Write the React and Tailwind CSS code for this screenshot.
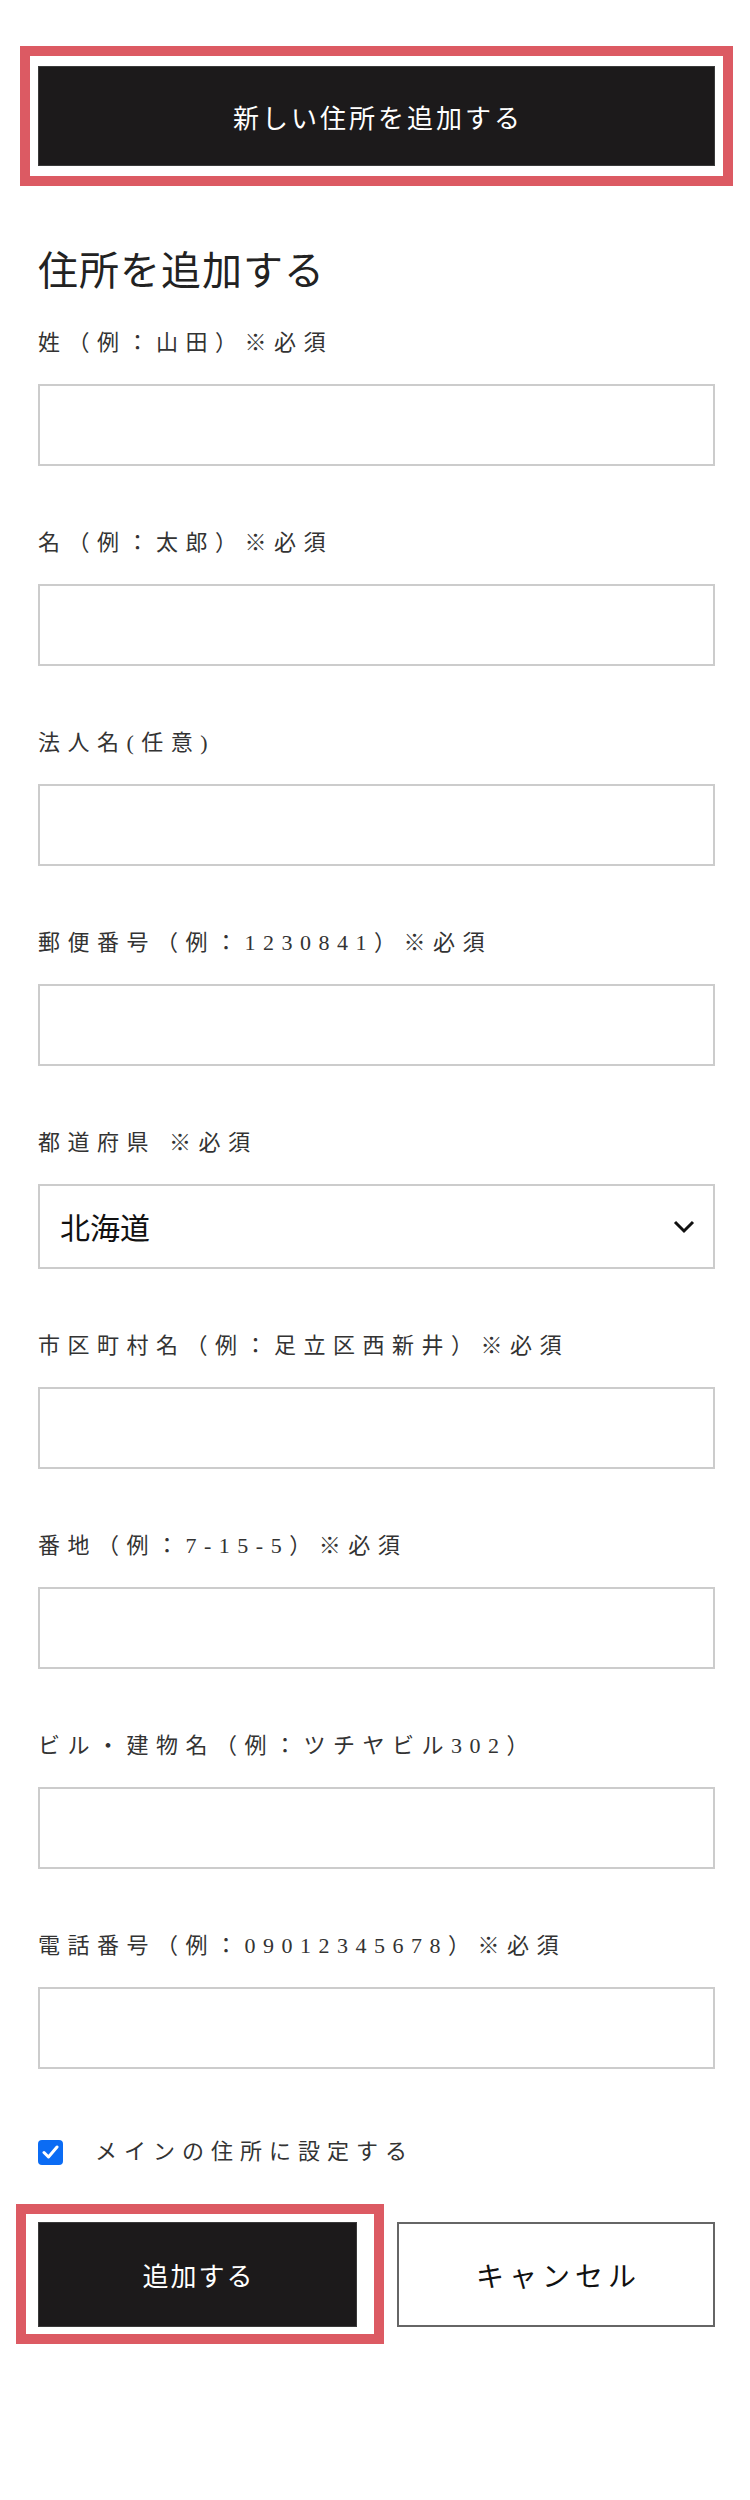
import React from "react";

const fields = [
  { label: "姓（例：山田）※必須" },
  { label: "名（例：太郎）※必須" },
  { label: "法人名(任意)" },
  { label: "郵便番号（例：1230841）※必須" },
  { label: "都道府県 ※必須", select: true },
  { label: "市区町村名（例：足立区西新井）※必須" },
  { label: "番地（例：7-15-5）※必須" },
  { label: "ビル・建物名（例：ツチヤビル302）" },
  { label: "電話番号（例：09012345678）※必須" },
];

const Field = ({ label, select }) => {
  return (
    <div>
      <label className="block text-[22px] leading-[32px] tracking-[7.5px] text-[#333] font-['Liberation_Serif','Noto_Sans_CJK_JP',serif]">
        {label}
      </label>
      {select ? (
        <div className="relative mt-[25px]">
          <select
            defaultValue="hokkaido"
            className="block h-[85px] w-full appearance-none rounded-none border-2 border-[#cccccc] bg-white pl-[20px] text-[30px] text-[#111] font-['Noto_Sans_CJK_JP',sans-serif] outline-none"
          >
            <option value="hokkaido">北海道</option>
          </select>
          <svg
            className="pointer-events-none absolute right-[20px] top-[36px]"
            width="22"
            height="14"
            viewBox="0 0 22 14"
            fill="none"
          >
            <path d="M2 2l9 9 9-9" stroke="#111" strokeWidth="3" />
          </svg>
        </div>
      ) : (
        <input
          type="text"
          className="mt-[25px] block h-[82px] w-full rounded-none border-2 border-[#cccccc] bg-white outline-none"
        />
      )}
    </div>
  );
};

const App = () => {
  return (
    <div className="w-[750px] bg-white pl-[38px] pr-[35px] pt-[66px] pb-[170px]">
      <div className="relative">
        <button className="block h-[100px] w-full border border-[#3a3a3a] bg-[#1c1a1b] pl-[3px] text-[26px] tracking-[3px] text-white font-['Noto_Sans_CJK_JP',sans-serif]">
          新しい住所を追加する
        </button>
        <div className="pointer-events-none absolute -inset-x-[18px] -inset-y-[20px] border-[10px] border-[#dc5a63]" />
      </div>

      <h2 className="mt-[82px] text-[40px] leading-[48px] tracking-[1px] text-[#222] font-['Liberation_Serif','Noto_Sans_CJK_JP',serif]">
        住所を追加する
      </h2>

      <div className="mt-[31px] flex flex-col gap-[61px]">
        {fields.map((f, idx) => (
          <Field key={idx} label={f.label} select={f.select} />
        ))}
      </div>

      <div className="mt-[67px] flex items-center">
        <span className="flex h-[25px] w-[25px] items-center justify-center rounded-[4px] bg-[#0b6cf4]">
          <svg width="17" height="14" viewBox="0 0 17 14" fill="none">
            <path
              d="M2 7.5l4.5 4.5L15 2"
              stroke="#fff"
              strokeWidth="3"
              strokeLinecap="round"
              strokeLinejoin="round"
            />
          </svg>
        </span>
        <span className="ml-[32px] text-[22px] leading-[32px] tracking-[7px] text-[#333] font-['Liberation_Serif','Noto_Sans_CJK_JP',serif]">
          メインの住所に設定する
        </span>
      </div>

      <div className="mt-[54px] flex gap-[40px]">
        <div className="relative w-[319px]">
          <button className="block h-[105px] w-full border border-[#3a3a3a] bg-[#1c1a1b] pl-[2px] text-[26px] tracking-[2px] text-white font-['Noto_Sans_CJK_JP',sans-serif]">
            追加する
          </button>
          <div className="pointer-events-none absolute -left-[22px] -right-[27px] -top-[18px] -bottom-[17px] border-[10px] border-[#dc5a63]" />
        </div>
        <button className="block h-[105px] flex-1 border-2 border-[#666] bg-white pl-[5px] text-[28px] tracking-[5px] text-[#111] font-['Noto_Sans_CJK_JP',sans-serif]">
          キャンセル
        </button>
      </div>
    </div>
  );
};

export default App;
